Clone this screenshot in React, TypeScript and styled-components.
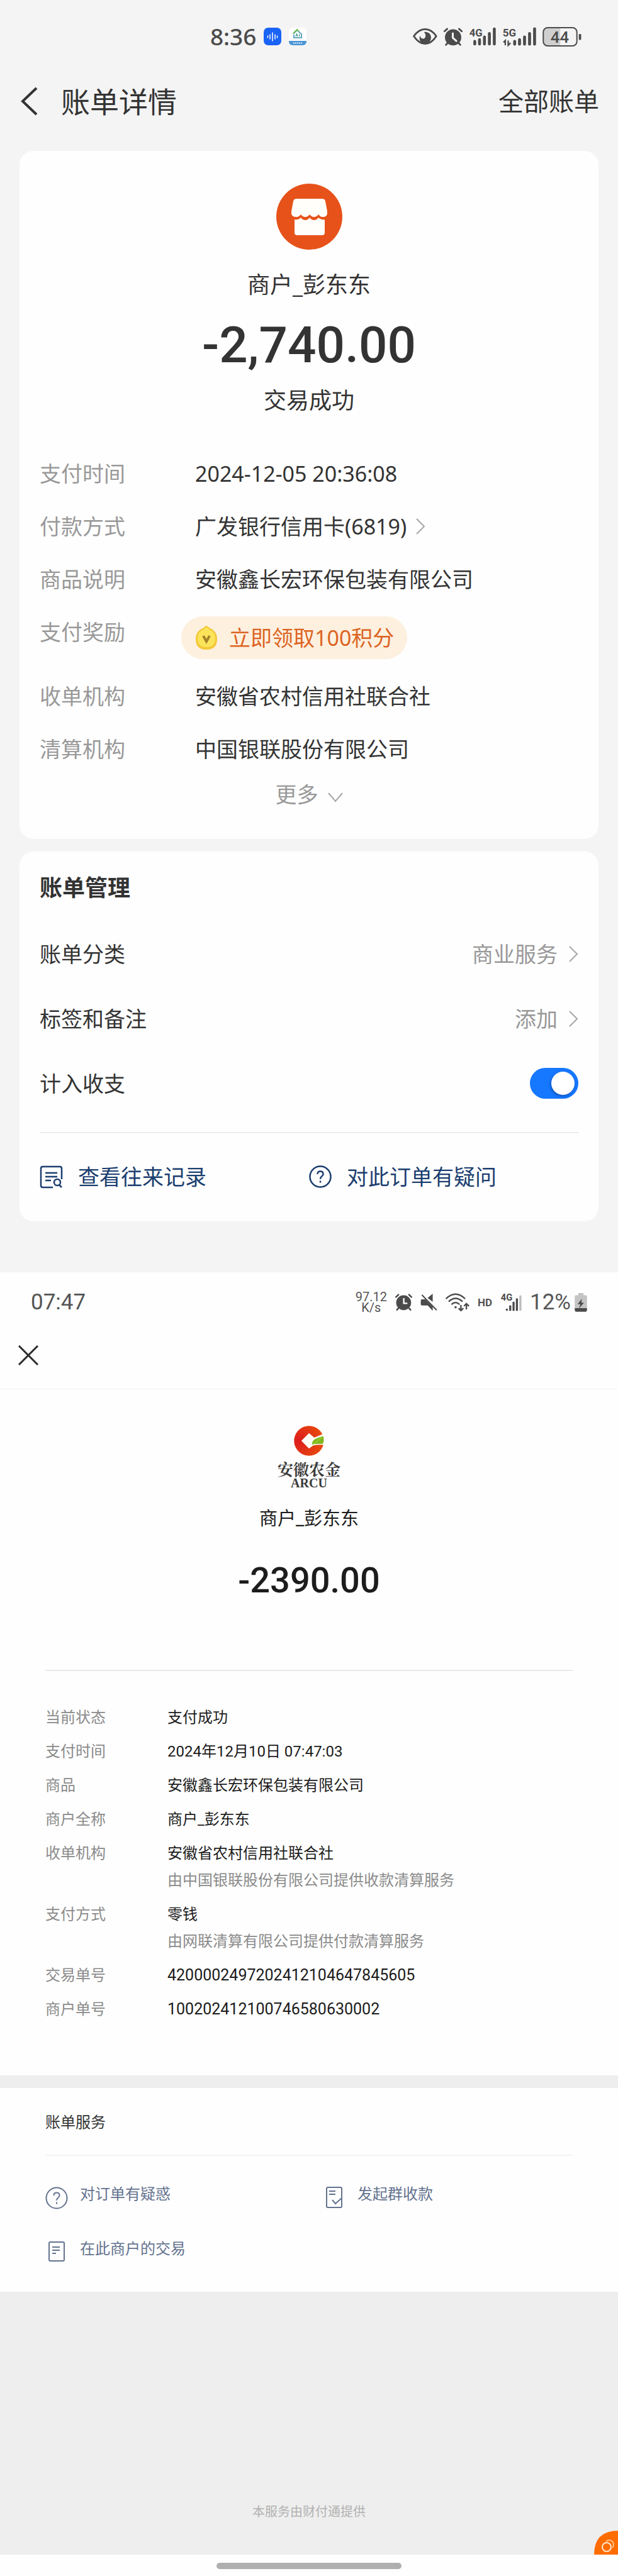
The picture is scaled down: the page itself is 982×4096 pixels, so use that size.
import React, { useState } from "react";
import styled, { createGlobalStyle } from "styled-components";

const sans = `"Noto Sans", "Noto Sans CJK SC", sans-serif`;
const roboto = `Roboto, "Noto Sans CJK SC", sans-serif`;
const ink = "#333333";
const muted = "#999999";
const glyph = "#4b4b4b";

const GlobalStyle = createGlobalStyle`
  *, *::before, *::after { box-sizing: border-box; }
  body { margin: 0; background: #fefefe; color: ${ink}; font-family: ${sans}; }
  h1, h2, p, dl, dt, dd { margin: 0; font-weight: 400; }
  button { border: 0; padding: 0; background: none; font: inherit; color: inherit; cursor: pointer; }
  a { color: inherit; text-decoration: none; }
  svg { display: block; flex: none; }
`;

/* ---------- shared ---------- */

const Icons = styled.div<{ $gap: number }>`
  display: flex;
  align-items: center;
  gap: ${(p) => p.$gap}px;
`;

const Divider = styled.hr<{ $tone: string }>`
  width: 100%;
  height: 2px;
  border: 0;
  margin: 0;
  background: ${(p) => p.$tone};
`;

/* ---------- Alipay bill ---------- */

const AlipayScreen = styled.section`
  background: #f4f4f4;
  padding-bottom: 81px;
`;

const AlipayStatus = styled.div`
  display: flex;
  align-items: center;
  justify-content: space-between;
  height: 116px;
  padding: 0 58px 0 34%;
  color: ${glyph};
  font: 500 37px/50px ${sans};
`;

const AlipayHeader = styled.header`
  display: flex;
  align-items: center;
  height: 90px;
  padding: 0 30px 0 32px;
  font-size: 40px;
  line-height: 60px;
`;

const BackButton = styled.button`
  margin-right: 37px;
`;

const PageTitle = styled.h1`
  flex: 1;
  font-size: 46px;
  line-height: 60px;
`;

const Card = styled.article<{ $top: number }>`
  display: flex;
  flex-direction: column;
  margin: ${(p) => p.$top}px 31px 0;
  padding: 0 32px 46px;
  border-radius: 22px;
  background: #fefefe;
  font-size: 34px;
  line-height: 50px;
`;

const MerchantBlock = styled.div`
  display: flex;
  flex-direction: column;
  align-items: center;
  padding-top: 52px;
  font-size: 36px;
`;

const MerchantName = styled.p`
  margin-top: 31px;
`;

const Amount = styled.p`
  margin: 26px 0 18px;
  font: 500 80px/90px ${roboto};
`;

const Details = styled.dl`
  display: flex;
  flex-direction: column;
  gap: 34px;
  margin-top: 66px;
`;

const DetailRow = styled.div`
  display: flex;
  align-items: flex-start;
`;

const DetailLabel = styled.dt`
  width: 247px;
  color: ${muted};
`;

const DetailValue = styled.dd`
  display: flex;
  align-items: center;
  gap: 15px;
`;

const RewardButton = styled.button`
  display: flex;
  align-items: center;
  gap: 19px;
  height: 68px;
  margin-left: -22px;
  padding: 0 21px 0 23px;
  border-radius: 34px;
  background: #fdf0df;
  color: #dc6423;
`;

const MoreButton = styled.button`
  display: flex;
  align-self: center;
  align-items: center;
  gap: 15px;
  margin-top: 22px;
  color: ${muted};
`;

const CardTitle = styled.h2`
  padding: 33px 0 28px;
  font-size: 36px;
  font-weight: 700;
`;

const SettingRow = styled.div`
  display: flex;
  align-items: center;
  justify-content: space-between;
  height: 103px;
`;

const SettingButton = styled.button`
  display: flex;
  align-items: center;
  gap: 18px;
  color: ${muted};
`;

const Toggle = styled.input`
  appearance: none;
  width: 77px;
  height: 49px;
  margin: 0;
  padding: 6px;
  border-radius: 25px;
  background: ${(p) => (p.checked ? "#1677ff" : "#cccccc")};
  display: flex;
  justify-content: ${(p) => (p.checked ? "flex-end" : "flex-start")};
  cursor: pointer;
  &::before {
    content: "";
    width: 37px;
    height: 37px;
    border-radius: 50%;
    background: #ffffff;
    box-shadow: -1px 2px 4px rgba(0, 0, 0, 0.3);
  }
`;

const SettingDivider = styled(Divider)`
  margin-top: 26px;
`;

const AlipayLinks = styled.nav`
  display: grid;
  grid-template-columns: 1fr 1fr;
  padding-top: 44px;
  color: #1c3f70;
`;

const AlipayLink = styled.a`
  display: flex;
  align-items: center;
  gap: 24px;
`;

/* ---------- WeChat bill ---------- */

const WechatStatus = styled.div`
  display: flex;
  align-items: center;
  justify-content: space-between;
  height: 92px;
  padding: 3px 49px 0;
  color: #555555;
  font: 400 35px/40px ${roboto};
`;

const NetSpeed = styled.span`
  font-size: 20px;
  line-height: 17px;
  text-align: center;
`;

const HdBadge = styled.span`
  font-size: 17px;
  line-height: 20px;
  font-weight: 700;
`;

const BatteryLevel = styled.span`
  display: flex;
  align-items: center;
  gap: 6px;
`;

const WechatNav = styled.header`
  display: flex;
  padding: 24px 29px 37px;
  border-bottom: 1px solid #f1f1f1;
`;

const WechatBody = styled.main`
  padding: 0 72px 87px;
  color: #1c1c1c;
`;

const WechatHead = styled.div`
  display: flex;
  flex-direction: column;
  align-items: center;
  padding: 58px 0 112px;
`;

const BrandName = styled.p`
  margin-top: 7px;
  color: #3a3a3a;
  font: 700 25px/26px "Noto Serif CJK SC", "Noto Sans CJK SC", serif;
`;

const BrandLatin = styled.p`
  color: #3a3a3a;
  font: 700 20px/20px "Liberation Serif", serif;
`;

const PayeeName = styled.p`
  margin-top: 27px;
  font: 400 29px/40px ${roboto};
`;

const WechatAmount = styled.p`
  margin-top: 48px;
  font: 500 56px/60px ${roboto};
`;

const Records = styled.dl`
  display: flex;
  flex-direction: column;
  gap: 18px;
  padding-top: 56px;
  font: 400 24px/36px ${roboto};
`;

const RecordLabel = styled.dt`
  width: 194px;
  color: #8b8b8b;
`;

const RecordValue = styled.dd<{ $digits?: boolean }>`
  font-size: ${(p) => (p.$digits ? 25 : 24)}px;
`;

const RecordNote = styled.p`
  margin-top: 7px;
  color: #8b8b8b;
`;

const Services = styled.section`
  padding: 37px 72px 44px;
  border-top: 20px solid #eeeeee;
  font: 400 24px/36px ${roboto};
`;

const ServicesTitle = styled.h2`
  margin-bottom: 33px;
  font-size: 24px;
  color: ${ink};
`;

const ServiceGrid = styled.nav`
  display: grid;
  grid-template-columns: 10fr 9fr;
  row-gap: 45px;
  padding-top: 43px;
  color: #64738f;
`;

const ServiceLink = styled.a`
  display: flex;
  gap: 19px;
  min-height: 42px;
`;

const ServiceIcon = styled.span`
  display: flex;
  justify-content: center;
  width: 36px;
  padding-top: 6px;
`;

const Footer = styled.footer`
  position: relative;
  display: flex;
  flex-direction: column;
  justify-content: flex-end;
  align-items: center;
  min-height: 418px;
  padding-bottom: 53px;
  background: #eeeeee;
  color: #b2b2b2;
  font: 400 20px/30px ${roboto};
`;

const FloatButton = styled.button`
  position: absolute;
  right: 0;
  bottom: 0;
`;

const HomeArea = styled.div`
  display: flex;
  justify-content: center;
  height: 33px;
  padding-top: 13px;
`;

const HomeBar = styled.span`
  width: 30%;
  height: 10px;
  border-radius: 5px;
  background: #afafaf;
`;

/* ---------- icons ---------- */

const VoiceAppIcon = () => (
  <svg width="28" height="28" viewBox="0 0 28 28">
    <rect width="28" height="28" rx="7" fill="#1a63f5" />
    <path d="M6.500 13v3M10 11v7M14 8v13M18 11v7M21.500 13v3" stroke="#fff" strokeWidth="1.500" strokeLinecap="round" />
  </svg>
);

const HouseAppIcon = () => (
  <svg width="28" height="28" viewBox="0 0 28 28">
    <rect width="28" height="28" rx="6" fill="#fff" />
    <path d="M0 21h28v1a6 6 0 0 1-6 6H6a6 6 0 0 1-6-6z" fill="#4b95d6" />
    <path d="M7 24.500h14" stroke="#d7eafa" strokeWidth="2" strokeDasharray="2 1" />
    <path d="M7 10l6-6 7 6v6H8v-5" fill="none" stroke="#3a8fb0" strokeWidth="1.600" />
    <path d="M7 9l6-6 3 3" fill="none" stroke="#6fbf4a" strokeWidth="1.800" />
    <path d="M11 14l1.500-4 1.500 4M16.500 10v4" fill="none" stroke="#3a9a80" strokeWidth="1.200" />
  </svg>
);

const EyeIcon = () => (
  <svg width="39" height="28" viewBox="42 80 154 108">
    <path d="M48 132C68 104 90 88 119 88s51 16 70 44c-19 30-41 48-70 48s-51-18-71-48z" fill="none" stroke={glyph} strokeWidth="11" strokeLinejoin="round" />
    <path d="M112 106c26-4 44 12 44 34 0 24-16 40-38 40-20 0-34-14-34-34 0-7 1-12 4-16 2 12 9 19 19 18 18-2 20-28 5-42z" fill={glyph} />
  </svg>
);

const AlarmRoundIcon = () => (
  <svg width="30" height="29" viewBox="237 77 118 113">
    <circle cx="296" cy="137" r="51" fill={glyph} />
    <path d="M242 99l17-15M350 99l-17-15M262 172l-11 12M330 172l11 12" stroke={glyph} strokeWidth="11" strokeLinecap="round" />
    <path d="M294 112v28l22 20" fill="none" stroke="#f4f4f4" strokeWidth="12" strokeLinecap="round" strokeLinejoin="round" />
  </svg>
);

const bars = (x: number) => (
  <path
    d={`M${x} 181v-17M${x + 30} 181v-28M${x + 61} 181v-44M${x + 92} 181v-66M${x + 123} 181v-95`}
    stroke={glyph}
    strokeWidth="18"
    strokeLinecap="round"
  />
);

const Signal4GIcon = () => (
  <svg width="43" height="38" viewBox="393 60 170 147">
    {bars(430)}
    <text x="396" y="132" fontFamily="Roboto, sans-serif" fontWeight="700" fontSize="66" fill={glyph}>4G</text>
  </svg>
);

const Signal5GIcon = () => (
  <svg width="54" height="38" viewBox="599 60 210 147">
    {bars(676)}
    <text x="602" y="132" fontFamily="Roboto, sans-serif" fontWeight="700" fontSize="66" fill={glyph}>5G</text>
    <path d="M607 170l11-11v29M636 159v29l14-14" fill="none" stroke={glyph} strokeWidth="9" />
  </svg>
);

const Battery44Icon = () => (
  <svg width="62" height="31" viewBox="849 72 244 123">
    <path d="M880 76h80v115h-80q-27 0-27-27v-61q0-27 27-27z" fill="#cfcfcf" />
    <rect x="853" y="76" width="212" height="115" rx="28" fill="none" stroke={glyph} strokeWidth="8" />
    <rect x="1077" y="116" width="15" height="37" rx="6" fill={glyph} />
    <text x="957" y="170" textAnchor="middle" fontFamily="Roboto, sans-serif" fontWeight="500" fontSize="102" fill={glyph}>44</text>
  </svg>
);

const BackIcon = () => (
  <svg width="28" height="46" viewBox="0 0 28 46" fill="none" stroke={ink} strokeWidth="4">
    <path d="M26 2L4 23l22 21" />
  </svg>
);

const ChevronRight = () => (
  <svg width="15" height="26" viewBox="0 0 15 26" fill="none" stroke="#a6a6a6" strokeWidth="2">
    <path d="M1 1l12 12L1 25" />
  </svg>
);

const ChevronDown = () => (
  <svg width="24" height="26" viewBox="0 0 24 26" fill="none" stroke="#a6a6a6" strokeWidth="2">
    <path d="M1 11l11 13L23 11" />
  </svg>
);

const ShopIcon = () => (
  <svg width="105" height="105" viewBox="0 0 105 105">
    <circle cx="52.500" cy="52.500" r="52.500" fill="#e6521a" />
    <path
      d="M32 24h41q4 0 5 4l3 16v4q-1 5-7 5-4 0-7-4-3 4-7 4t-7-4q-3 4-7 4t-7-4q-3 4-7 4-7 0-8-5v-4l3-16q1-4 5-4z"
      fill="#fffefa"
    />
    <path
      d="M29 57q6 1 10-3 3 4 7 4t7-4q3 4 7 4t7-4q4 4 10 3v21q0 4-4 4H33q-4 0-4-4z"
      fill="#fffefa"
    />
  </svg>
);

const CoinIcon = () => (
  <svg width="34" height="38" viewBox="0 0 34 38">
    <path d="M17 0q2 0 4 3 13 5 13 18 0 17-17 17T0 21Q0 8 13 3q2-3 4-3z" fill="#f3c838" />
    <path d="M17 2l3 3q11 4 11 15 0 14-14 14T3 20Q3 9 14 5z" fill="#fbe45a" />
    <path d="M12 16l5 9 5-9" fill="none" stroke="#a5822a" strokeWidth="4" />
  </svg>
);

const RecordSearchIcon = () => (
  <svg width="37" height="37" viewBox="0 0 37 37" fill="none" stroke="#1c3f70" strokeWidth="2.500">
    <path d="M21 35H5q-3 0-3-3V5q0-3 3-3h27q3 0 3 3v17M9 12h19M9 18h19M9 24h9" />
    <circle cx="28" cy="27" r="5" />
    <path d="M31 31l4 4" />
  </svg>
);

const QuestionIcon = ({ color, weight }: { color: string; weight: number }) => (
  <svg width="36" height="36" viewBox="0 0 36 36" fill="none" stroke={color} strokeWidth={weight}>
    <circle cx="18" cy="18" r="16.500" />
    <path d="M13.500 14q0-4.500 4.500-4.500t4.500 4.200q0 2.300-2.500 4-2 1.500-2 4" />
    <path d="M18 24.500v3" />
  </svg>
);

const AlarmSquareIcon = () => (
  <svg width="27" height="27" viewBox="306 62 105 105">
    <circle cx="358" cy="118" r="46" fill={glyph} />
    <path d="M311 83l15-15M406 83l-15-15M325 153l-8 9M392 153l8 9" stroke={glyph} strokeWidth="10" strokeLinecap="round" />
    <path d="M359 89v33h22" fill="none" stroke="#fff" strokeWidth="9" />
  </svg>
);

const MuteIcon = () => (
  <svg width="27" height="27" viewBox="467 60 104 107">
    <path d="M511 87l32-27v52zM468 103q0-7 7-7h21l47 47v25l-31-34h-37q-7 0-7-7z" fill={glyph} />
    <path d="M475 68l93 96" stroke={glyph} strokeWidth="8" />
  </svg>
);

const WifiIcon = () => (
  <svg width="38" height="29" viewBox="621 57 148 113" fill="none" stroke={glyph} strokeWidth="9">
    <path d="M623 93q60-58 119 0M640 110q43-40 86 0M657 128q26-24 51 0" />
    <circle cx="683" cy="145" r="7" fill={glyph} stroke="none" />
    <path d="M716 131v34M702 151l14 15 15-15M750 158v-34M735 138l15-15 16 15" />
  </svg>
);

const SignalThinIcon = () => (
  <svg width="34" height="39" viewBox="960 40 134 154">
    <text x="963" y="106" fontFamily="Roboto, sans-serif" fontWeight="700" fontSize="58" fill={glyph}>4G</text>
    <circle cx="1001" cy="164" r="7" fill={glyph} />
    <path d="M1022 171v-33M1043 171v-56M1064 171v-78" stroke={glyph} strokeWidth="13" />
    <path d="M1086 171V75" stroke="#bdbdbd" strokeWidth="13" />
  </svg>
);

const ChargingIcon = () => (
  <svg width="20" height="30" viewBox="1412 57 76 117">
    <path d="M1434 57h32v14h14q8 0 8 8v73h-76V79q0-8 8-8h14z" fill="#c4c4c4" />
    <path d="M1412 151h76v10q0 12-12 12h-52q-12 0-12-12z" fill={glyph} />
    <path d="M1456 92l-26 34h17l-9 28 31-38h-16z" fill={glyph} />
  </svg>
);

const CloseIcon = () => (
  <svg width="32" height="32" viewBox="0 0 32 32" stroke="#2b2b2b" strokeWidth="3">
    <path d="M1 1l30 30M31 1L1 31" />
  </svg>
);

const BankLogo = () => (
  <svg width="48" height="48" viewBox="0 0 184 186">
    <defs>
      <radialGradient id="bank" cx="0.15" cy="0.5" r="0.8">
        <stop offset="0" stopColor="#dd1c1c" />
        <stop offset="1" stopColor="#e8490e" />
      </radialGradient>
    </defs>
    <circle cx="92" cy="93" r="92" fill="url(#bank)" />
    <path d="M92 46l32 27q26-10 54-22l6 4v63q-40-3-66 4l-26 18-47-47z" fill="#fffdf6" />
    <path d="M110 116q0-28 28-38 24-8 40-16 10 30-2 50-30-3-66 4z" fill="#7fb81e" />
    <path d="M112 114q30-14 62-48" stroke="#a6d43c" strokeWidth="4" fill="none" />
  </svg>
);

const SlipCheckIcon = () => (
  <svg width="26" height="34" viewBox="0 0 26 34" fill="none" stroke="#64738f" strokeWidth="2">
    <path d="M25 17V3q0-2-2-2H3Q1 1 1 3v28q0 2 2 2h20q2 0 2-2V18l-10 9-5-6M5 7h10M5 12h10" />
  </svg>
);

const SlipIcon = () => (
  <svg width="26" height="32" viewBox="0 0 26 32" fill="none" stroke="#64738f" strokeWidth="2">
    <path d="M3 1h20q2 0 2 2v26q0 2-2 2H3q-2 0-2-2V3q0-2 2-2zM6 9h12M6 14h12M6 19h6" />
  </svg>
);

const RingsIcon = () => (
  <svg width="38" height="38" viewBox="0 0 38 38">
    <path d="M0 38Q0 0 38 0v38z" fill="#ff6c00" />
    <path d="M19 17a7 7 0 1 1 10 10" fill="none" stroke="#ffbf80" strokeWidth="2" />
    <circle cx="20" cy="26" r="7" fill="none" stroke="#ffe9cf" strokeWidth="2" />
  </svg>
);

/* ---------- data ---------- */

const records: { label: string; value: string; note?: string; digits?: boolean }[] = [
  { label: "当前状态", value: "支付成功" },
  { label: "支付时间", value: "2024年12月10日 07:47:03" },
  { label: "商品", value: "安徽鑫长宏环保包装有限公司" },
  { label: "商户全称", value: "商户_彭东东" },
  { label: "收单机构", value: "安徽省农村信用社联合社", note: "由中国银联股份有限公司提供收款清算服务" },
  { label: "支付方式", value: "零钱", note: "由网联清算有限公司提供付款清算服务" },
  { label: "交易单号", value: "4200002497202412104647845605", digits: true },
  { label: "商户单号", value: "100202412100746580630002", digits: true },
];

const Detail = ({ label, children }: { label: string; children: React.ReactNode }) => (
  <DetailRow>
    <DetailLabel>{label}</DetailLabel>
    <DetailValue>{children}</DetailValue>
  </DetailRow>
);

export default function App() {
  const [counted, setCounted] = useState(true);

  return (
    <>
      <GlobalStyle />
      <AlipayScreen>
        <AlipayStatus>
          <Icons $gap={12}>
            <span>8:36</span>
            <VoiceAppIcon />
            <HouseAppIcon />
          </Icons>
          <Icons $gap={10}>
            <EyeIcon />
            <AlarmRoundIcon />
            <Signal4GIcon />
            <Signal5GIcon />
            <Battery44Icon />
          </Icons>
        </AlipayStatus>
        <AlipayHeader>
          <BackButton aria-label="返回">
            <BackIcon />
          </BackButton>
          <PageTitle>账单详情</PageTitle>
          <a href="#bills">全部账单</a>
        </AlipayHeader>

        <Card $top={34}>
          <MerchantBlock>
            <ShopIcon />
            <MerchantName>商户_彭东东</MerchantName>
            <Amount>-2,740.00</Amount>
            <p>交易成功</p>
          </MerchantBlock>
          <Details>
            <Detail label="支付时间">2024-12-05 20:36:08</Detail>
            <Detail label="付款方式">
              广发银行信用卡(6819)
              <ChevronRight />
            </Detail>
            <Detail label="商品说明">安徽鑫长宏环保包装有限公司</Detail>
            <Detail label="支付奖励">
              <RewardButton>
                <CoinIcon />
                立即领取100积分
              </RewardButton>
            </Detail>
            <Detail label="收单机构">安徽省农村信用社联合社</Detail>
            <Detail label="清算机构">中国银联股份有限公司</Detail>
          </Details>
          <MoreButton>
            更多
            <ChevronDown />
          </MoreButton>
        </Card>

        <Card $top={20}>
          <CardTitle>账单管理</CardTitle>
          <SettingRow>
            <span>账单分类</span>
            <SettingButton>
              商业服务
              <ChevronRight />
            </SettingButton>
          </SettingRow>
          <SettingRow>
            <span>标签和备注</span>
            <SettingButton>
              添加
              <ChevronRight />
            </SettingButton>
          </SettingRow>
          <SettingRow>
            <label htmlFor="counted">计入收支</label>
            <Toggle
              id="counted"
              type="checkbox"
              checked={counted}
              onChange={(e) => setCounted(e.target.checked)}
            />
          </SettingRow>
          <SettingDivider $tone="#ececec" />
          <AlipayLinks>
            <AlipayLink href="#history">
              <RecordSearchIcon />
              查看往来记录
            </AlipayLink>
            <AlipayLink href="#question">
              <QuestionIcon color="#1c3f70" weight={2.5} />
              对此订单有疑问
            </AlipayLink>
          </AlipayLinks>
        </Card>
      </AlipayScreen>

      <WechatStatus>
        <span>07:47</span>
        <Icons $gap={13}>
          <NetSpeed>
            97.12
            <br />
            K/s
          </NetSpeed>
          <AlarmSquareIcon />
          <MuteIcon />
          <WifiIcon />
          <HdBadge>HD</HdBadge>
          <SignalThinIcon />
          <BatteryLevel>
            12%
            <ChargingIcon />
          </BatteryLevel>
        </Icons>
      </WechatStatus>
      <WechatNav>
        <button aria-label="关闭">
          <CloseIcon />
        </button>
      </WechatNav>
      <WechatBody>
        <WechatHead>
          <BankLogo />
          <BrandName>安徽农金</BrandName>
          <BrandLatin>ARCU</BrandLatin>
          <PayeeName>商户_彭东东</PayeeName>
          <WechatAmount>-2390.00</WechatAmount>
        </WechatHead>
        <Divider $tone="#eaeaea" />
        <Records>
          {records.map((r) => (
            <DetailRow key={r.label}>
              <RecordLabel>{r.label}</RecordLabel>
              <RecordValue $digits={r.digits}>
                {r.value}
                {r.note && <RecordNote>{r.note}</RecordNote>}
              </RecordValue>
            </DetailRow>
          ))}
        </Records>
      </WechatBody>
      <Services>
        <ServicesTitle>账单服务</ServicesTitle>
        <Divider $tone="#f3f3f3" />
        <ServiceGrid>
          <ServiceLink href="#doubt">
            <ServiceIcon>
              <QuestionIcon color="#64738f" weight={2} />
            </ServiceIcon>
            对订单有疑惑
          </ServiceLink>
          <ServiceLink href="#collect">
            <ServiceIcon>
              <SlipCheckIcon />
            </ServiceIcon>
            发起群收款
          </ServiceLink>
          <ServiceLink href="#merchant">
            <ServiceIcon>
              <SlipIcon />
            </ServiceIcon>
            在此商户的交易
          </ServiceLink>
        </ServiceGrid>
      </Services>
      <Footer>
        <p>本服务由财付通提供</p>
        <FloatButton aria-label="悬浮窗">
          <RingsIcon />
        </FloatButton>
      </Footer>
      <HomeArea>
        <HomeBar />
      </HomeArea>
    </>
  );
}
